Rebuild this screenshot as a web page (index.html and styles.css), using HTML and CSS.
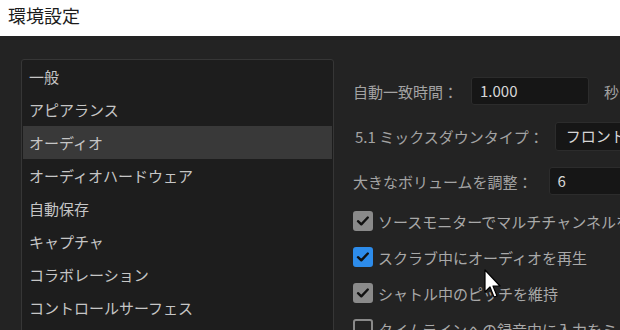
FILE: index.html
```html
<!DOCTYPE html>
<html lang="ja">

<head>
    <title>環境設定</title>
    <meta name="viewport" content="initial-scale=1, width=device-width">
    <link rel="stylesheet" href="styles.css">
</head>

<body>
    <div class="titlebar">環境設定</div>
    <div class="window">
        <div class="sidebar">
            <ul class="nav">
                <li>一般</li>
                <li>アピアランス</li>
                <li class="active">オーディオ</li>
                <li>オーディオハードウェア</li>
                <li>自動保存</li>
                <li>キャプチャ</li>
                <li>コラボレーション</li>
                <li>コントロールサーフェス</li>
            </ul>
        </div>
        <div class="content">
            <div class="field field-1">
                <span class="label">自動一致時間：</span>
                <span class="input input-time">1.000</span>
                <span class="unit">秒</span>
            </div>
            <div class="field field-2">
                <span class="label">5.1 ミックスダウンタイプ：</span>
                <span class="input input-select">フロント + リア + LFE</span>
            </div>
            <div class="field field-3">
                <span class="label">大きなボリュームを調整：</span>
                <span class="input input-wide">6</span>
            </div>
            <div class="checks">
                <label class="check"><span class="box on"></span>ソースモニターでマルチチャンネルをダウンミックス</label>
                <label class="check"><span class="box on blue"></span>スクラブ中にオーディオを再生</label>
                <label class="check"><span class="box on"></span>シャトル中のピッチを維持</label>
                <label class="check"><span class="box"></span>タイムラインへの録音中に入力をミュート</label>
            </div>
        </div>
    </div>

    <svg class="cursor" width="20" height="30" viewBox="0 0 20 30">
        <path d="M1 1 L1 23 L6 18 L10 28 L13 27 L9 17 L16 17 Z" fill="#fff" stroke="#000" stroke-width="1.2" stroke-linejoin="round" />
    </svg>
</body>
</html>
```

FILE: styles.css
```css
* {
    box-sizing: border-box;
    font-family: "Noto Sans CJK JP", "Noto Sans", sans-serif;
}

html,
body {
    margin: 0;
    padding: 0;
    width: 620px;
    height: 330px;
    overflow: hidden;
    background-color: #232323;
}

body {
    position: relative;
}

.titlebar {
    height: 36px;
    padding: 4px 0 0 8px;
    background-color: #fff;
    color: #1c1c1c;
    font-size: 18px;
    line-height: 22px;
}

.window {
    display: flex;
    padding: 23px 0 0 21px;
    height: 294px;
}

.sidebar {
    flex: none;
    width: 313px;
    height: 300px;
    padding: 0 1px;
    background-color: #1d1d1d;
    border: 1px solid #363636;
    border-radius: 3px;
}

.nav {
    list-style: none;
    margin: 0;
    padding: 0;
}

.nav li {
    height: 33px;
    line-height: 33px;
    padding-left: 6px;
    color: #c6c6c6;
    font-size: 15px;
}

.nav li.active {
    background-color: #393939;
}

.content {
    flex: none;
    padding: 18px 0 0 19px;
    white-space: nowrap;
}

.field {
    display: flex;
    align-items: center;
    height: 28px;
    color: #a3a3a3;
    font-size: 15px;
}

.field-2 {
    margin-top: 17px;
    padding-left: 2px;
}

.field-3 {
    margin-top: 17px;
}

.field-1 .label {
    margin-right: 13px;
}

.field-2 .label {
    margin-right: 11px;
}

.field-3 .label {
    margin-right: 16px;
}

.input {
    height: 28px;
    line-height: 26px;
    padding: 0 8px;
    background-color: #161616;
    border: 1px solid #2c2c2c;
    border-radius: 3px;
    color: #d6d6d6;
    font-size: 15px;
}

.input-time {
    width: 118px;
}

.input-select {
    height: 29px;
    width: 200px;
    padding-left: 10px;
}

.input-wide {
    width: 160px;
}

.unit {
    margin-left: 15px;
}

.checks {
    display: flex;
    flex-flow: column;
    gap: 16px;
    margin-top: 16px;
}

.check {
    display: flex;
    align-items: center;
    gap: 5px;
    height: 20px;
    color: #a9a9a9;
    font-size: 15px;
}

.box {
    flex: none;
    width: 20px;
    height: 20px;
    border: 2px solid #8a8a8a;
    border-radius: 3px;
}

.box.on {
    background-color: #8a8a8a;
    background-image: url("data:image/svg+xml,%3Csvg xmlns='http://www.w3.org/2000/svg' width='16' height='16' viewBox='0 0 16 16'%3E%3Cpath d='M3 8.2 L6.3 11.3 L12.8 4.5' fill='none' stroke='%23111' stroke-width='2.4' stroke-linecap='round' stroke-linejoin='round'/%3E%3C/svg%3E");
    background-repeat: no-repeat;
    background-position: center;
}

.box.blue {
    background-color: #2d8ceb;
    border-color: #2d8ceb;
}

.cursor {
    position: absolute;
    left: 484px;
    top: 269px;
}
```
